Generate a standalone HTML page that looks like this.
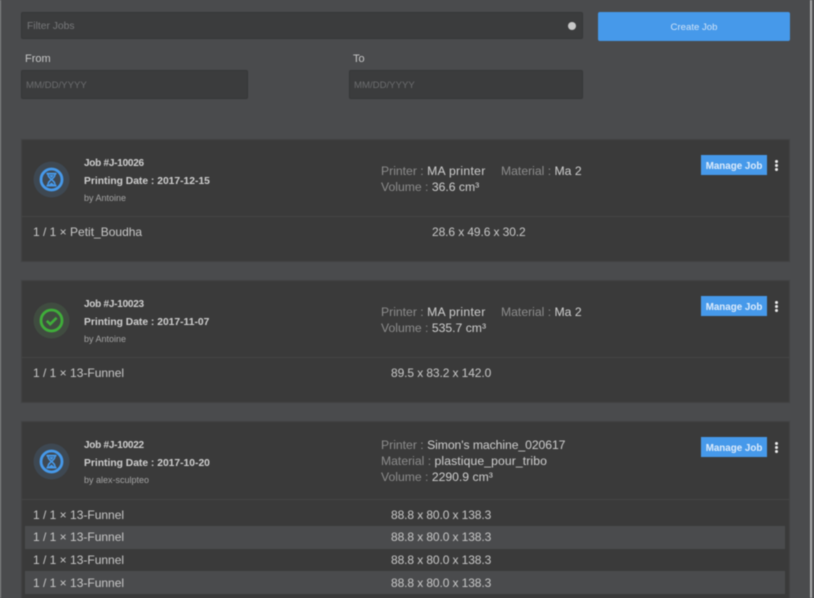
<!DOCTYPE html>
<html><head><meta charset="utf-8"><style>
html,body{margin:0;padding:0;width:814px;height:598px;overflow:hidden;background:#4a4b4d}
body{position:relative;font-family:"Liberation Sans",sans-serif;color:#d0d0d0}
#p{position:absolute;left:0;top:0;width:814px;height:598px;filter:blur(.5px)}
#p div,#p svg{position:absolute}
.t{white-space:nowrap;line-height:16px}
.inp{background:#3b3c3d;border:1px solid #363738;box-sizing:border-box;border-radius:2px}
.card{left:22px;width:767px;background:#3a3a3a;box-shadow:0 0 0 1px #424344}
.sep{left:22px;width:767px;height:1px;background:#454545}
.btn{left:701px;width:66px;height:20px;background:#4699ea;color:#dcebfb;font-size:9.8px;font-weight:bold;line-height:23px;text-align:center;white-space:nowrap}
.j{font-size:10.3px;font-weight:bold;color:#cfcfcf}
.j1{font-size:10px;font-weight:bold;color:#cfcfcf;letter-spacing:-.25px}
.by{font-size:9px;color:#a4a4a4}
.m{font-size:12.2px;color:#8c8c8c}
.m b{font-weight:normal;color:#cfcfcf}
.r{font-size:12px;color:#c8c8c8}
.d{font-size:12px;color:#c8c8c8;letter-spacing:-.1px}
.st{left:25px;width:760px;height:22.5px;background:#4a4b4d}
.dot{width:3px;height:3px;background:#eee;border-radius:50%;left:775px}
</style></head><body><div id="p">
<div style="left:0;top:0;width:1px;height:598px;background:#8b8c8d"></div>
<div style="left:810px;top:0;width:2px;height:598px;background:#a9aaab"></div>
<div style="left:812px;top:0;width:2px;height:598px;background:#4f5052"></div>

<div class="inp" style="left:21px;top:12px;width:562px;height:27px"></div>
<div class="t" style="left:27px;top:19px;font-size:10.3px;color:#77787a">Filter Jobs</div>
<div style="left:568px;top:21.5px;width:8px;height:8px;border-radius:50%;background:#c8c8c8"></div>
<div style="left:598px;top:12px;width:192px;height:29px;background:#4699ea;border-radius:2px"></div>
<div class="t" style="left:598px;top:20px;width:192px;text-align:center;font-size:9.6px;color:#cfe3f8">Create Job</div>

<div class="t" style="left:25px;top:51px;font-size:11px;color:#c8c8c8">From</div>
<div class="t" style="left:353px;top:51px;font-size:11px;color:#c8c8c8">To</div>
<div class="inp" style="left:21px;top:70px;width:227px;height:29px"></div>
<div class="inp" style="left:349px;top:70px;width:234px;height:29px"></div>
<div class="t" style="left:26px;top:77.5px;font-size:9.6px;color:#6c6d6f">MM/DD/YYYY</div>
<div class="t" style="left:354px;top:77.5px;font-size:9.6px;color:#6c6d6f">MM/DD/YYYY</div>

<!-- Card 1 -->
<div class="card" style="top:140px;height:121px"></div>
<div class="sep" style="top:216px"></div>
<svg style="left:33px;top:160.5px" width="37" height="37" viewBox="0 0 37 37"><circle cx="18.5" cy="18.5" r="18" fill="#3e4852"/><circle cx="18.5" cy="18.5" r="10.5" fill="none" stroke="#4699ea" stroke-width="2.8"/><path d="M13.5 12.6h10M13.5 24.6h10" fill="none" stroke="#4699ea" stroke-width="1.8"/><path d="M15 13c0 4 3 4 3 5.5s-3 1.5-3 5.5M22 13c0 4-3 4-3 5.5s3 1.5 3 5.5" fill="none" stroke="#4699ea" stroke-width="1.5"/><path d="M15.5 24l3-2.5 3 2.5zM16 14h5l-2.5 3z" fill="#4699ea"/></svg>
<div class="t j1" style="left:84px;top:155.5px">Job #J-10026</div>
<div class="t j" style="left:84px;top:174px">Printing Date : 2017-12-15</div>
<div class="t by" style="left:84px;top:190px">by Antoine</div>
<div class="t m" style="left:381px;top:163px">Printer : <b style="letter-spacing:.3px">MA printer</b></div>
<div class="t m" style="left:501px;top:163px">Material : <b>Ma 2</b></div>
<div class="t m" style="left:381px;top:179px">Volume : <b>36.6 cm³</b></div>
<div class="btn" style="top:155px">Manage Job</div>
<div class="dot" style="top:160px"></div><div class="dot" style="top:164px"></div><div class="dot" style="top:168px"></div>
<div class="t r" style="left:33px;top:224px">1 / 1 × Petit_Boudha</div>
<div class="t d" style="left:432px;top:224px">28.6 x 49.6 x 30.2</div>

<!-- Card 2 -->
<div class="card" style="top:281px;height:121px"></div>
<div class="sep" style="top:357px"></div>
<svg style="left:33px;top:302px" width="37" height="37" viewBox="0 0 37 37"><circle cx="18.5" cy="18.5" r="18" fill="#404c40"/><circle cx="18.5" cy="18.5" r="10.5" fill="none" stroke="#3fae3a" stroke-width="2.8"/><path d="M13.8 18.8l3.4 3.4 6.4-6.4" fill="none" stroke="#3fae3a" stroke-width="2.6"/></svg>
<div class="t j1" style="left:84px;top:296.5px">Job #J-10023</div>
<div class="t j" style="left:84px;top:315px">Printing Date : 2017-11-07</div>
<div class="t by" style="left:84px;top:331px">by Antoine</div>
<div class="t m" style="left:381px;top:304px">Printer : <b style="letter-spacing:.3px">MA printer</b></div>
<div class="t m" style="left:501px;top:304px">Material : <b>Ma 2</b></div>
<div class="t m" style="left:381px;top:320px">Volume : <b>535.7 cm³</b></div>
<div class="btn" style="top:296px">Manage Job</div>
<div class="dot" style="top:301px"></div><div class="dot" style="top:305px"></div><div class="dot" style="top:309px"></div>
<div class="t r" style="left:33px;top:365px">1 / 1 × 13-Funnel</div>
<div class="t d" style="left:391px;top:365px">89.5 x 83.2 x 142.0</div>

<!-- Card 3 -->
<div class="card" style="top:422px;height:190px"></div>
<div class="sep" style="top:499px"></div>
<svg style="left:33px;top:442.5px" width="37" height="37" viewBox="0 0 37 37"><circle cx="18.5" cy="18.5" r="18" fill="#3e4852"/><circle cx="18.5" cy="18.5" r="10.5" fill="none" stroke="#4699ea" stroke-width="2.8"/><path d="M13.5 12.6h10M13.5 24.6h10" fill="none" stroke="#4699ea" stroke-width="1.8"/><path d="M15 13c0 4 3 4 3 5.5s-3 1.5-3 5.5M22 13c0 4-3 4-3 5.5s3 1.5 3 5.5" fill="none" stroke="#4699ea" stroke-width="1.5"/><path d="M15.5 24l3-2.5 3 2.5zM16 14h5l-2.5 3z" fill="#4699ea"/></svg>
<div class="t j1" style="left:84px;top:437.5px">Job #J-10022</div>
<div class="t j" style="left:84px;top:456px">Printing Date : 2017-10-20</div>
<div class="t by" style="left:84px;top:472px">by alex-sculpteo</div>
<div class="t m" style="left:381px;top:437px">Printer : <b style="letter-spacing:-.07px">Simon's machine_020617</b></div>
<div class="t m" style="left:381px;top:453px">Material : <b style="letter-spacing:.1px">plastique_pour_tribo</b></div>
<div class="t m" style="left:381px;top:469px">Volume : <b>2290.9 cm³</b></div>
<div class="btn" style="top:437px">Manage Job</div>
<div class="dot" style="top:442px"></div><div class="dot" style="top:446px"></div><div class="dot" style="top:450px"></div>
<div class="st" style="top:526px"></div>
<div class="st" style="top:571px"></div>
<div class="t r" style="left:33px;top:506.5px">1 / 1 × 13-Funnel</div>
<div class="t d" style="left:391px;top:506.5px">88.8 x 80.0 x 138.3</div>
<div class="t r" style="left:33px;top:529px">1 / 1 × 13-Funnel</div>
<div class="t d" style="left:391px;top:529px">88.8 x 80.0 x 138.3</div>
<div class="t r" style="left:33px;top:552px">1 / 1 × 13-Funnel</div>
<div class="t d" style="left:391px;top:552px">88.8 x 80.0 x 138.3</div>
<div class="t r" style="left:33px;top:574.5px">1 / 1 × 13-Funnel</div>
<div class="t d" style="left:391px;top:574.5px">88.8 x 80.0 x 138.3</div>
</div></body></html>
